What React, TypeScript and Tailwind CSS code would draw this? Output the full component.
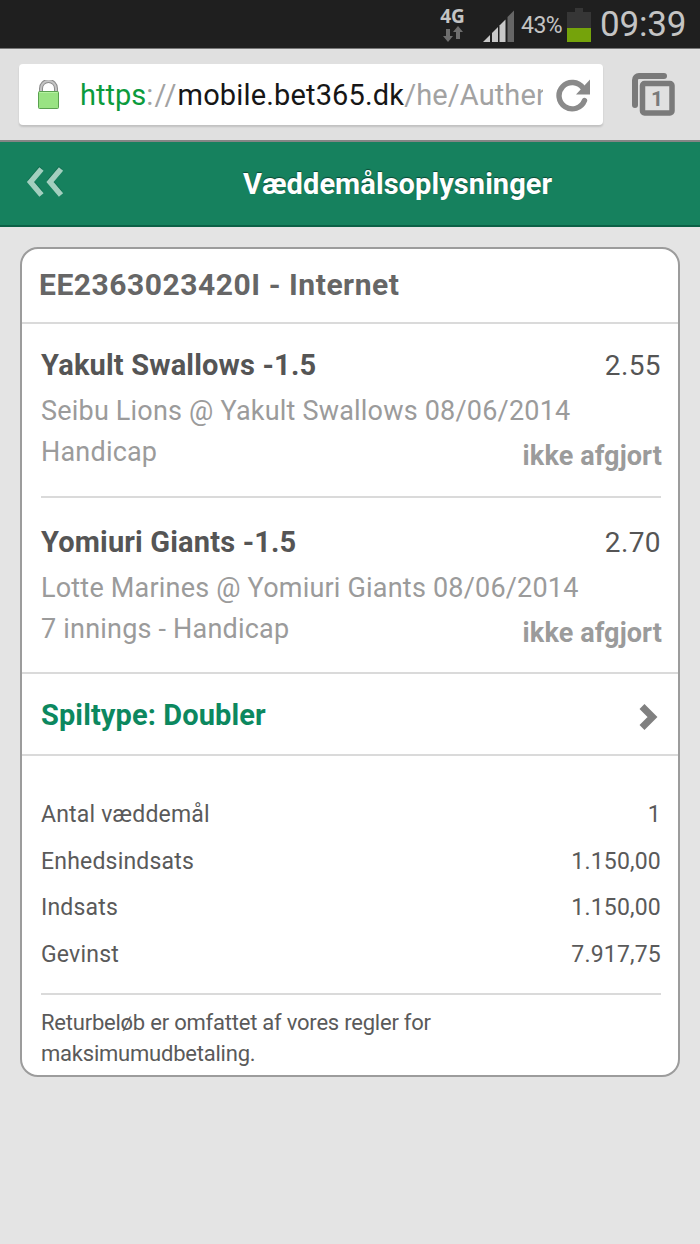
import React from "react";

const BETS = [
  {
    pick: "Yakult Swallows -1.5",
    odds: "2.55",
    match: "Seibu Lions @ Yakult Swallows 08/06/2014",
    market: "Handicap",
    status: "ikke afgjort",
  },
  {
    pick: "Yomiuri Giants -1.5",
    odds: "2.70",
    match: "Lotte Marines @ Yomiuri Giants 08/06/2014",
    market: "7 innings - Handicap",
    status: "ikke afgjort",
  },
];

const TOTALS = [
  { label: "Antal væddemål", value: "1" },
  { label: "Enhedsindsats", value: "1.150,00" },
  { label: "Indsats", value: "1.150,00" },
  { label: "Gevinst", value: "7.917,75" },
];

function StatusBar() {
  return (
    <div className="flex h-[49px] justify-end border-b border-[#777] bg-[#1f1f1f] pr-3.5 text-[#c4c4c4]">
      <div className="mr-[17px] flex w-[25px] flex-col items-center pt-[7px]">
        <span className="font-['Noto_Sans'] text-[19px] leading-[18px] font-bold">4G</span>
        <svg width="20" height="16" viewBox="0 0 20 16" className="mt-[1px]" fill="#6e6e6e">
          <path d="M3 3h4v7h3L5 16L0 10h3z" />
          <path d="M15 0l5 6h-3v7h-4V6h-3z" />
        </svg>
      </div>
      <svg width="33" height="33" viewBox="0 0 33 33" className="mt-[9px] mr-[6px]">
        <path d="M1 33L8 26V33z" fill="#c8c8c8" />
        <path d="M10 33V24L16 18V33z" fill="#c8c8c8" />
        <path d="M17.500 33V16.500L23.500 10.500V33z" fill="#c8c8c8" />
        <path d="M25.500 33V8L32 1.500V33z" fill="#666" />
      </svg>
      <span className="mr-1 w-[42px] text-[23px] leading-[51px] tracking-[-0.5px] whitespace-nowrap">43%</span>
      <svg width="24" height="34" viewBox="0 0 24 34" className="mt-2 mr-[9px]">
        <path d="M8 0h8v4h8v16H0V4h8z" fill="#363636" />
        <path d="M0 20h24v14H0z" fill="#75a30b" />
      </svg>
      <span className="w-[86px] text-[35px] leading-[49px] tracking-[-0.2px] whitespace-nowrap">09:39</span>
    </div>
  );
}

function AddressBar() {
  return (
    <div className="flex h-[93px] border-b-2 border-[#858585] bg-[#e0e0e0] pt-[15px] pl-[19px]">
      <div className="flex h-[61px] w-[584px] rounded-[4px] bg-white pl-[18px] shadow-[0_2px_2px_rgba(0,0,0,0.14)]">
        <svg width="23" height="30" viewBox="0 0 23 30" className="mt-4">
          <path d="M4 12V8.500a7.500 7.500 0 0 1 15 0V12" fill="none" stroke="#8b8b8b" strokeWidth="4" />
          <path d="M4 12V8.500a7.500 7.500 0 0 1 15 0V12" fill="none" stroke="#c4c4c4" strokeWidth="2" />
          <rect x="1.500" y="11.500" width="20" height="17" rx="1" fill="#99e383" stroke="#5aa150" />
          <path d="M2.500 12.500h18" stroke="#b4f2a0" />
        </svg>
        <div className="ml-5 w-[463px] overflow-hidden text-[29px] leading-[63px] whitespace-nowrap text-[#a2a2a2]">
          <span className="text-[#0b9b3c]">https</span>
          <span className="tracking-[1.2px]">://</span>
          <span className="tracking-[0.15px] text-[#161616]">mobile.bet365.dk</span>
          <span className="tracking-[0.1px]">/he/Authen</span>
        </div>
        <svg width="35" height="34" viewBox="0 0 35 34" className="mt-[14px] ml-[13px]">
          <path d="M27 10A13.200 13.200 0 1 0 28.500 22.500" fill="none" stroke="#8a8a8a" strokeWidth="5.400" strokeLinecap="round" />
          <path d="M34 1.500V16.500H20z" fill="#8a8a8a" />
        </svg>
      </div>
      <svg width="44" height="44" viewBox="0 0 44 44" className="mt-[9px] ml-[29px]">
        <path d="M3 32V7a4 4 0 0 1 4-4h25" fill="none" stroke="#7a7a7a" strokeWidth="6" strokeLinecap="round" />
        <rect x="6.500" y="6" width="37.500" height="38" rx="4" fill="#e0e0e0" />
        <rect x="10.500" y="10.500" width="29.500" height="29.500" rx="2" fill="#e0e0e0" stroke="#7a7a7a" strokeWidth="5.500" />
        <text x="25" y="32.500" textAnchor="middle" fontFamily="Roboto, sans-serif" fontSize="21" fontWeight="700" fill="#7a7a7a">1</text>
      </svg>
    </div>
  );
}

function TitleBar() {
  return (
    <div className="flex h-[85px] border-b-2 border-[#0b6046] bg-[#16815e] pl-[26px]">
      <svg width="38" height="34" viewBox="0 0 38 34" className="mt-[23px]" fill="none">
        <path d="M15 2.500L4.500 15L15 27.500M34.500 2.500L24 15L34.500 27.500" stroke="#0b6046" strokeWidth="4.500" opacity=".6" />
        <path d="M15.500 4L4.500 17L15.500 30M35 4L24 17L35 30" stroke="#a3cfbf" strokeWidth="5.500" />
      </svg>
      <h1 className="ml-[179px] text-[29px] leading-[85px] font-bold tracking-[0.07px] whitespace-nowrap text-white [text-shadow:0_-1px_1px_rgba(0,0,0,0.45)]">
        Væddemålsoplysninger
      </h1>
    </div>
  );
}

export default function App() {
  return (
    <div className="min-h-[1244px] w-[700px] overflow-hidden bg-[#e4e4e4] font-['Roboto',sans-serif]">
      <StatusBar />
      <AddressBar />
      <TitleBar />

      {/* BET SLIP */}
      <main className="mx-5 mt-5 rounded-[18px] border-2 border-[#9c9c9c] bg-white">
        <h2 className="h-[75px] border-b-2 border-[#dadada] pl-[17px] text-[30px] leading-[71px] font-bold tracking-[0.54px] whitespace-nowrap text-[#666]">
          EE2363023420I - Internet
        </h2>

        {/* SELECTIONS */}
        {BETS.map((bet, idx) => (
          <section key={idx} className={idx === 0 ? "pt-[22px] pr-[17px] pl-[19px]" : "pt-[25px] pr-[17px] pl-[19px]"}>
            <div className="flex justify-between text-[28px] leading-10 text-[#555]">
              <span className="text-[29px] leading-[38px] font-bold tracking-[0.17px]">{bet.pick}</span>
              <span className="tracking-[0.4px]">{bet.odds}</span>
            </div>
            <p className="mt-[5px] text-[27px] leading-[41px] tracking-[0.2px] whitespace-nowrap text-[#9b9b9b]">{bet.match}</p>
            <div className="flex justify-between text-[27px] leading-[41px] text-[#9b9b9b]">
              <span className="tracking-[0.2px]">{bet.market}</span>
              <span className="-mr-px pt-1 font-bold tracking-[0.1px]">{bet.status}</span>
            </div>
            <div className={idx === 0 ? "mt-[19px] h-0.5 bg-[#dadada]" : "-mr-[17px] -ml-[19px] mt-[18px] h-0.5 bg-[#dadada]"} />
          </section>
        ))}

        {/* BET TYPE */}
        <div className="flex h-[82px] items-center justify-between border-b-2 border-[#dadada] pr-5 pl-[19px]">
          <span className="pt-[1px] text-[29px] leading-10 font-bold tracking-[0.1px] text-[#0c885f]">Spiltype: Doubler</span>
          <svg width="19" height="28" viewBox="0 0 19 28" className="mt-1.5" fill="none">
            <path d="M3 3.500L13.500 14L3 24.500" stroke="#808080" strokeWidth="7" />
          </svg>
        </div>

        {/* TOTALS */}
        <dl className="pt-9 pr-[17px] pl-[19px] text-[23px] leading-[46.7px] tracking-[0.2px] text-[#5a5a5a]">
          {TOTALS.map((row) => (
            <div key={row.label} className="flex justify-between">
              <dt>{row.label}</dt>
              <dd>{row.value}</dd>
            </div>
          ))}
        </dl>
        <p className="mt-3.5 mr-[17px] ml-[19px] border-t-2 border-[#dadada] pt-3 pb-1.5 text-[22px] leading-[31px] tracking-[-0.22px] text-[#5a5a5a]">
          Returbeløb er omfattet af vores regler for
          <br />
          maksimumudbetaling.
        </p>
      </main>
    </div>
  );
}
